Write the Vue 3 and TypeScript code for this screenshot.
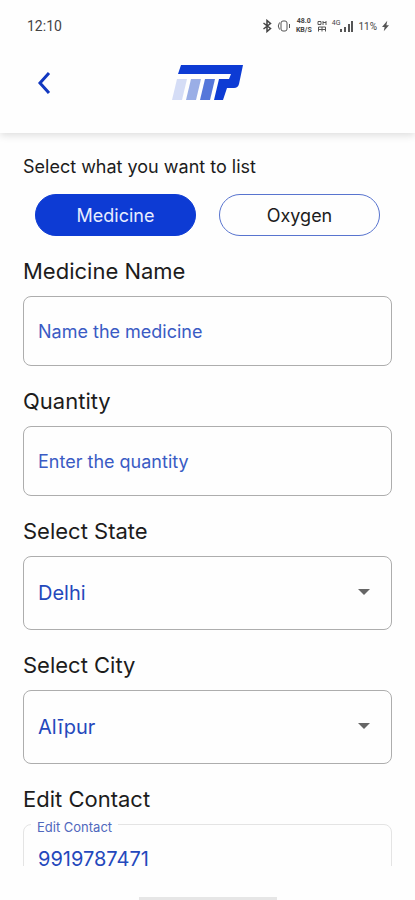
<script setup lang="ts">
import { ref } from 'vue'

type Kind = 'Medicine' | 'Oxygen'

const kinds: Kind[] = ['Medicine', 'Oxygen']
const kind = ref<Kind>('Medicine')
const medicineName = ref('')
const quantity = ref('')
const state = ref('Delhi')
const city = ref('Alīpur')
const contact = ref('9919787471')
</script>

<template>
  <div class="screen">
    <header class="top">
      <div class="status">
        <span class="clock">12:10</span>
        <div class="indicators">
          <svg class="glyph strong" width="10" height="14" viewBox="0 0 10 14" aria-hidden="true">
            <path d="M1.500 4l7 5.500L5 12.500v-11l3.500 3L1.500 10" />
          </svg>
          <svg class="glyph" width="14" height="14" viewBox="0 0 14 14" aria-hidden="true">
            <rect x="4" y="2" width="6" height="10" rx="2" />
            <path d="M2.500 3.500Q0 7 2.500 10.500M12.500 5v4" />
          </svg>
          <span class="rate"><span>48.0</span><span>KB/S</span></span>
          <svg class="glyph" width="10" height="14" viewBox="0 0 10 14" aria-hidden="true">
            <path d="M1 2.500h3v3H1zM6 2v4M9 2v4M6 3.500h3M1.500 12.500V8h7v4.500M1.500 10.500h7M5 8v4.500" />
          </svg>
          <span class="network">
            <span>4G</span>
            <svg class="solid" width="13" height="14" viewBox="0 0 13 14" aria-hidden="true">
              <path d="M0 10h2v3H0zM4 8h2v5H4zM8 5h2v8H8zM11 2h2v11h-2z" />
            </svg>
          </span>
          <span class="battery">11%</span>
          <svg class="solid" width="7" height="12" viewBox="0 0 8 12" aria-hidden="true">
            <path d="M6 0L0 7h3l-1 5 6-7H5z" />
          </svg>
        </div>
      </div>
      <div class="bar">
        <button class="back" type="button" aria-label="Back">
          <svg width="16" height="24" viewBox="0 0 16 24" aria-hidden="true">
            <path d="M13 2L4 12l9 10" />
          </svg>
        </button>
        <svg class="logo" width="72" height="37" viewBox="0 0 72 37" role="img" aria-label="MP">
          <path fill="#0d3bd4" d="M9 1h62l-4 19q-1 4-5 4h-7l-4 12h-9l5-21h10l2-5H6z" />
          <path fill="#d5ddf6" d="M5 15h10l-5 21H0z" />
          <path fill="#9aaee6" d="M19 15h10l-5 21H14z" />
          <path fill="#5577da" d="M33 15h10l-5 21H28z" />
        </svg>
      </div>
    </header>

    <main class="body">
      <h1 class="prompt">Select what you want to list</h1>
      <div class="kinds">
        <button
          v-for="item in kinds"
          :key="item"
          type="button"
          class="pill"
          :class="{ active: kind === item }"
          :aria-pressed="kind === item"
          @click="kind = item"
        >{{ item }}</button>
      </div>

      <form class="form" @submit.prevent>
        <div class="field">
          <label for="medicine">Medicine Name</label>
          <input id="medicine" v-model="medicineName" type="text" class="control" placeholder="Name the medicine" />
        </div>
        <div class="field">
          <label for="quantity">Quantity</label>
          <input id="quantity" v-model="quantity" type="text" class="control" placeholder="Enter the quantity" />
        </div>
        <div class="field">
          <label for="state">Select State</label>
          <div class="choice">
            <select id="state" v-model="state" class="control tall">
              <option>Delhi</option>
            </select>
            <svg class="caret" width="12" height="6" viewBox="0 0 12 6" aria-hidden="true"><path d="M0 0h12L6 6z" /></svg>
          </div>
        </div>
        <div class="field">
          <label for="city">Select City</label>
          <div class="choice">
            <select id="city" v-model="city" class="control tall">
              <option>Alīpur</option>
            </select>
            <svg class="caret" width="12" height="6" viewBox="0 0 12 6" aria-hidden="true"><path d="M0 0h12L6 6z" /></svg>
          </div>
        </div>
        <div class="field">
          <label for="contact">Edit Contact</label>
          <div class="choice">
            <input id="contact" v-model="contact" type="tel" class="control faint" />
            <label class="floating" for="contact">Edit Contact</label>
          </div>
        </div>
      </form>
    </main>

    <footer class="gesture"><span class="handle"></span></footer>
  </div>
</template>

<style>
body {
  background: #fefefe;
}
</style>

<style scoped>
.screen {
  display: flex;
  flex-direction: column;
  height: 100vh;
  overflow: hidden;
  background: #fefefe;
  color: #1c1c1c;
  font-family: Inter, 'Open Sans', sans-serif;
}

.top {
  flex: none;
  position: relative;
  padding: 16px 24px 32px;
  background: #fefefe;
  box-shadow: 0 2px 8px rgba(0, 0, 0, 0.14);
}

.status {
  display: flex;
  align-items: center;
  justify-content: space-between;
  height: 20px;
  padding: 0 2px 0 3px;
  color: #444;
}

.clock {
  font-family: Roboto, sans-serif;
  font-size: 14px;
}

.indicators {
  display: flex;
  align-items: center;
  gap: 5px;
  font-family: Roboto, sans-serif;
}

.glyph {
  fill: none;
  stroke: #555;
  stroke-width: 1;
}

.glyph.strong {
  stroke: #444;
  stroke-width: 1.5;
}

.rate {
  display: flex;
  flex-direction: column;
  align-items: center;
  font-size: 7px;
  font-weight: 700;
  line-height: 9px;
}

.network {
  display: flex;
  font-size: 7px;
  line-height: 8px;
}

.solid {
  fill: #555;
}

.battery {
  font-size: 10px;
}

.bar {
  display: grid;
  grid-template-columns: 40px 1fr 40px;
  align-items: center;
  padding-top: 28px;
}

.back {
  display: flex;
  justify-content: center;
  padding: 0;
  border: 0;
  background: none;
}

.back path {
  fill: none;
  stroke: #1238c0;
  stroke-width: 3;
}

.logo {
  justify-self: center;
}

.body {
  flex: 1;
  min-height: 0;
  overflow: hidden;
  padding: 23px 23px 0;
}

.prompt {
  margin: 0 0 16px;
  font-size: 18px;
  font-weight: 400;
  line-height: 22px;
}

.kinds {
  display: grid;
  grid-template-columns: 1fr 1fr;
  gap: 23px;
  padding: 0 12px;
}

.pill {
  height: 42px;
  padding: 0;
  border: 1px solid #5874cf;
  border-radius: 21px;
  background: #fefefe;
  color: #1c1c1c;
  font-family: inherit;
  font-size: 18px;
}

.pill.active {
  border-color: #0d3bd4;
  background: #0d3bd4;
  color: #e8edff;
}

.form {
  display: grid;
  gap: 22px;
  padding-top: 22px;
}

.field {
  display: grid;
  gap: 11px;
}

.field > label {
  font-size: 22px;
  line-height: 27px;
}

.control {
  box-sizing: border-box;
  width: 100%;
  height: 70px;
  margin: 0;
  padding: 0 14px;
  border: 1px solid #adadad;
  border-radius: 8px;
  outline: none;
  appearance: none;
  background: transparent;
  color: #2448bc;
  font-family: inherit;
  font-size: 20px;
}

.control::placeholder {
  color: #3a5bc4;
  font-size: 18px;
  opacity: 1;
}

.control.tall {
  height: 74px;
}

.control.faint {
  border-color: #e4e4e4;
}

.choice {
  display: grid;
  position: relative;
}

.caret {
  position: absolute;
  top: 33px;
  right: 22px;
  fill: #666;
  pointer-events: none;
}

.floating {
  position: absolute;
  top: -6px;
  left: 8px;
  padding: 0 6px;
  background: #fefefe;
  color: #5068bd;
  font-size: 13px;
  line-height: 18px;
}

.gesture {
  flex: none;
  display: flex;
  align-items: flex-end;
  justify-content: center;
  height: 34px;
}

.handle {
  width: 138px;
  height: 3px;
  background: #e6e6e6;
}
</style>
